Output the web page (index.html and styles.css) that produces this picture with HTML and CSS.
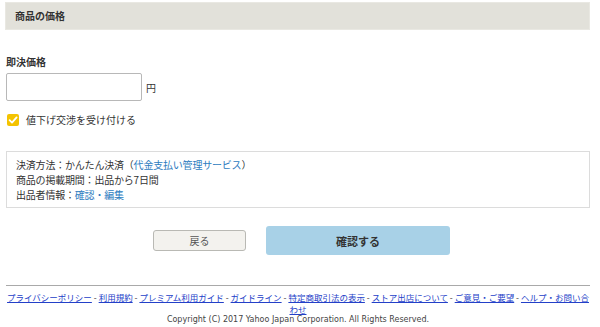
FILE: index.html
```html
<!DOCTYPE html>
<html lang="ja">
<head>
<meta charset="utf-8">
<link rel="stylesheet" href="styles.css">
</head>
<body>
<div class="page">
  <div class="sec-head">商品の価格</div>
  <div class="field">
    <div class="field-label">即決価格</div>
    <div class="price-row">
      <input class="price-input" type="text">
      <span class="yen">円</span>
    </div>
    <label class="check-row">
      <span class="checkbox"><svg viewBox="0 0 12 12" width="12" height="12"><path d="M2.6 6.2 L5 8.6 L9.6 3.4" fill="none" stroke="#fff" stroke-width="1.8" stroke-linecap="round" stroke-linejoin="round"/></svg></span>
      <span class="check-text">値下げ交渉を受け付ける</span>
    </label>
  </div>
  <div class="info-box">
    <div>決済方法：かんたん決済（<a class="info-link" href="#">代金支払い管理サービス</a>）</div>
    <div>商品の掲載期間：出品から7日間</div>
    <div>出品者情報：<a class="info-link" href="#">確認・編集</a></div>
  </div>
  <div class="actions">
    <button class="btn-back">戻る</button>
    <button class="btn-confirm">確認する</button>
  </div>
  <div class="footer">
    <div class="footer-links"><a href="#">プライバシーポリシー</a> - <a href="#">利用規約</a> - <a href="#">プレミアム利用ガイド</a> - <a href="#">ガイドライン</a> - <a href="#">特定商取引法の表示</a> - <a href="#">ストア出店について</a> - <a href="#">ご意見・ご要望</a> - <a href="#">ヘルプ・お問い合わせ</a></div>
    <div class="copyright">Copyright (C) 2017 Yahoo Japan Corporation. All Rights Reserved.</div>
  </div>
</div>
</body>
</html>
```
FILE: styles.css
```css
html, body { margin: 0; padding: 0; background: #fff; }
body {
  font-family: "Noto Sans CJK JP", "Noto Sans", sans-serif;
  color: #333;
  font-size: 10px;
}
.page {
  width: 585px;
  margin-left: 5px;
  padding-top: 2px;
}
.sec-head {
  height: 26px;
  line-height: 26px;
  background: #e2e1da;
  border: 1px solid #e9e8e2;
  padding-left: 9px;
  font-weight: bold;
  font-size: 10px;
  color: #333;
}
.field {
  padding: 25px 1px 0 1px;
}
.field-label {
  font-weight: bold;
  font-size: 10px;
  line-height: 14px;
}
.price-row {
  display: flex;
  align-items: center;
  margin-top: 4px;
}
.price-input {
  box-sizing: border-box;
  width: 136px;
  height: 28px;
  border: 1px solid #b8b8b8;
  border-radius: 2px;
  margin: 0;
  padding: 0 4px;
  background: #fff;
}
.yen {
  margin-left: 4px;
  font-size: 10px;
}
.check-row {
  display: flex;
  align-items: center;
  margin-top: 12px;
  padding-left: 1px;
}
.checkbox {
  width: 12px;
  height: 12px;
  background: #f4c300;
  border-radius: 2px;
  display: flex;
}
.check-text {
  margin-left: 7px;
  font-size: 10px;
  line-height: 14px;
}
.info-box {
  margin: 24px 0 0 1px;
  border: 1px solid #dcdcdc;
  padding: 5px 9px 5px 9px;
  line-height: 15px;
  font-size: 10px;
  letter-spacing: -0.2px;
}
.info-link {
  color: #2d7cc0;
  text-decoration: none;
}
.actions {
  display: flex;
  justify-content: center;
  align-items: center;
  gap: 20px;
  margin-top: 18px;
  padding-left: 8px;
}
.btn-back {
  width: 93px;
  height: 21px;
  background: #f3f2ee;
  border: 1px solid #b9b9b4;
  border-radius: 3px;
  font-family: inherit;
  font-size: 10px;
  color: #555;
  padding: 0;
}
.btn-confirm {
  width: 184px;
  height: 29px;
  background: #a8d1e7;
  border: none;
  border-radius: 3px;
  font-family: inherit;
  font-size: 11px;
  font-weight: bold;
  color: #333;
  padding: 0;
}
.footer {
  margin: 30px 0 0 1px;
  border-top: 1px solid #a9a9a9;
  padding-top: 5px;
}
.footer-links {
  font-size: 8.5px;
  line-height: 12px;
  color: #333;
  text-align: center;
}
.footer-links a {
  color: #2340c8;
  text-decoration: underline;
}
.copyright {
  text-align: center;
  font-family: "DejaVu Sans", sans-serif;
  font-size: 8px;
  line-height: 10px;
  color: #444;
}
```
